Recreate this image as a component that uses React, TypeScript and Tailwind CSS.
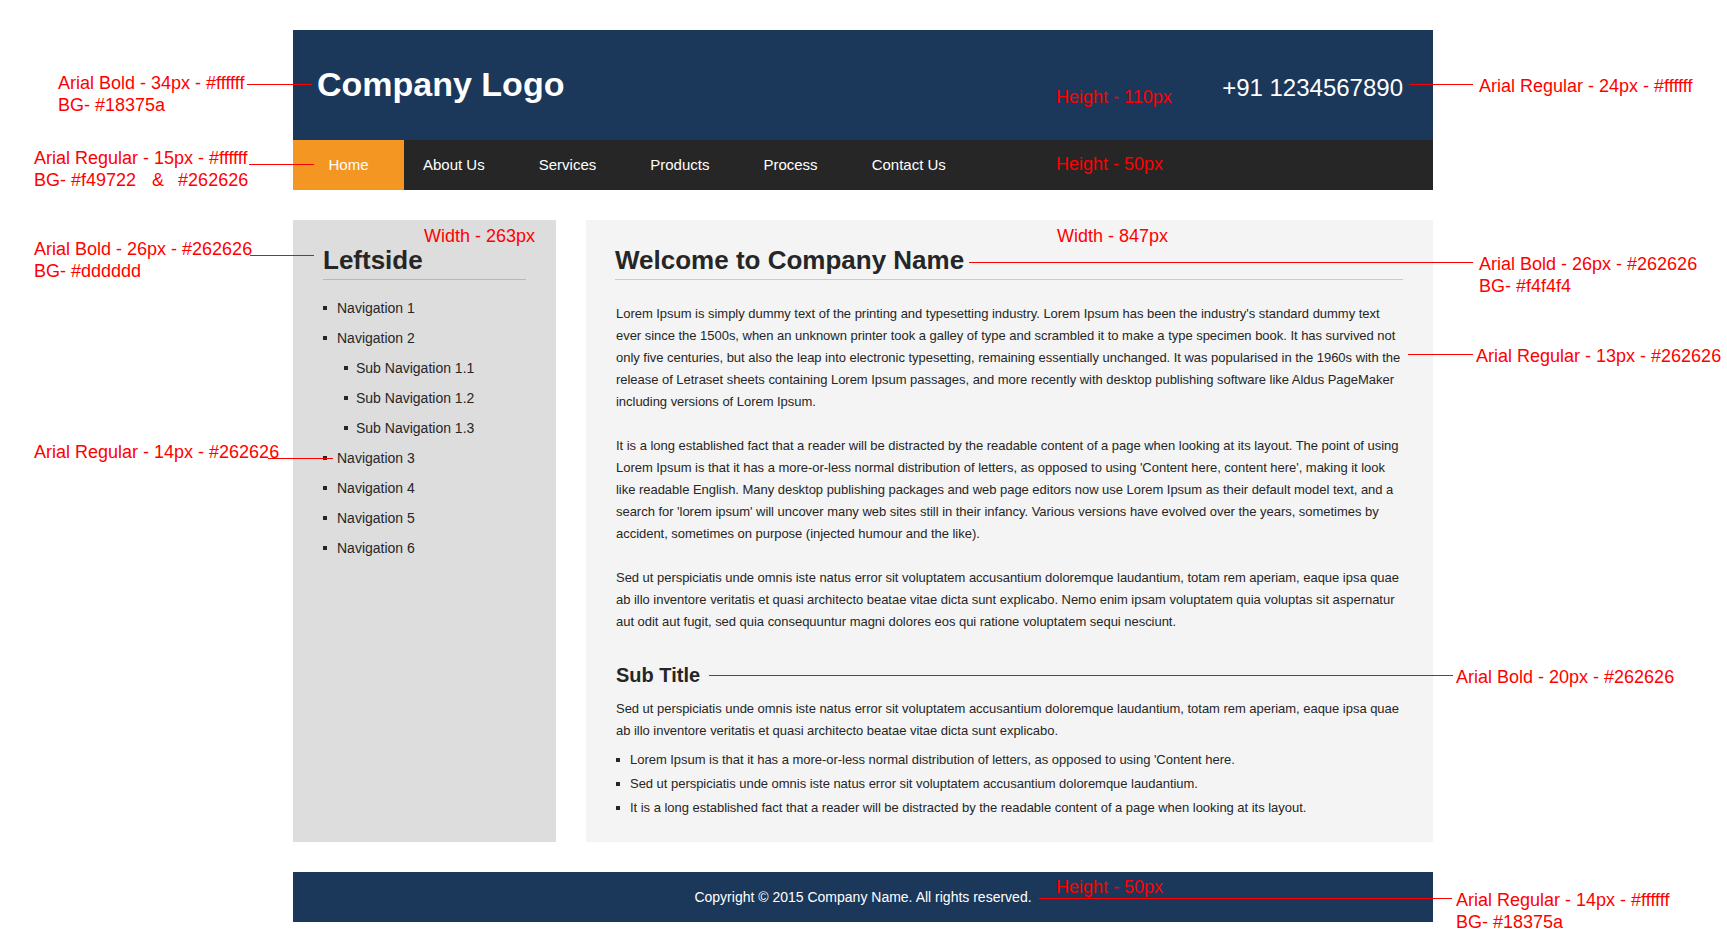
import React from "react";

const navLinks = ["About Us", "Services", "Products", "Process", "Contact Us"];

const sideNav = [
  { label: "Navigation 1", sub: false },
  { label: "Navigation 2", sub: false },
  { label: "Sub Navigation 1.1", sub: true },
  { label: "Sub Navigation 1.2", sub: true },
  { label: "Sub Navigation 1.3", sub: true },
  { label: "Navigation 3", sub: false },
  { label: "Navigation 4", sub: false },
  { label: "Navigation 5", sub: false },
  { label: "Navigation 6", sub: false },
];

const paragraphs = [
  "Lorem Ipsum is simply dummy text of the printing and typesetting industry. Lorem Ipsum has been the industry's standard dummy text ever since the 1500s, when an unknown printer took a galley of type and scrambled it to make a type specimen book. It has survived not only five centuries, but also the leap into electronic typesetting, remaining essentially unchanged. It was popularised in the 1960s with the release of Letraset sheets containing Lorem Ipsum passages, and more recently with desktop publishing software like Aldus PageMaker including versions of Lorem Ipsum.",
  "It is a long established fact that a reader will be distracted by the readable content of a page when looking at its layout. The point of using Lorem Ipsum is that it has a more-or-less normal distribution of letters, as opposed to using 'Content here, content here', making it look like readable English. Many desktop publishing packages and web page editors now use Lorem Ipsum as their default model text, and a search for 'lorem ipsum' will uncover many web sites still in their infancy. Various versions have evolved over the years, sometimes by accident, sometimes on purpose (injected humour and the like).",
  "Sed ut perspiciatis unde omnis iste natus error sit voluptatem accusantium doloremque laudantium, totam rem aperiam, eaque ipsa quae ab illo inventore veritatis et quasi architecto beatae vitae dicta sunt explicabo. Nemo enim ipsam voluptatem quia voluptas sit aspernatur aut odit aut fugit, sed quia consequuntur magni dolores eos qui ratione voluptatem sequi nesciunt.",
];

const bullets = [
  "Lorem Ipsum is that it has a more-or-less normal distribution of letters, as opposed to using 'Content here.",
  "Sed ut perspiciatis unde omnis iste natus error sit voluptatem accusantium doloremque laudantium.",
  "It is a long established fact that a reader will be distracted by the readable content of a page when looking at its layout.",
];

// red spec notes drawn over the mockup
const Notes = () => (
  <div className="pointer-events-none text-[18px] leading-[22px] text-[#ff0000]">
    <div className="absolute left-[58px] top-[72px]">
      <div>Arial Bold - 34px - #ffffff</div>
      <div>BG- #18375a</div>
    </div>
    <div className="absolute left-[247px] top-[84px] h-px w-[65px] bg-[#ff0000]" />

    <div className="absolute left-[34px] top-[147px]">
      <div>Arial Regular - 15px - #ffffff</div>
      <div>
        BG- #f49722<span className="ml-[16px]">&amp;</span>
        <span className="ml-[14px]">#262626</span>
      </div>
    </div>
    <div className="absolute left-[249px] top-[164px] h-px w-[65px] bg-[#ff0000]" />

    <div className="absolute left-[34px] top-[238px]">
      <div>Arial Bold - 26px - #262626</div>
      <div>BG- #dddddd</div>
    </div>
    <div className="absolute left-[250px] top-[255px] h-px w-[64px] bg-[#ff0000]" />

    <div className="absolute left-[34px] top-[441px]">Arial Regular - 14px - #262626</div>
    <div className="absolute left-[268px] top-[458px] h-px w-[65px] bg-[#ff0000]" />

    <div className="absolute left-[424px] top-[225px]">Width - 263px</div>
    <div className="absolute left-[1056px] top-[86px]">Height - 110px</div>
    <div className="absolute left-[1056px] top-[153px]">Height - 50px</div>
    <div className="absolute left-[1057px] top-[225px]">Width - 847px</div>

    <div className="absolute left-[1479px] top-[75px]">Arial Regular - 24px - #ffffff</div>
    <div className="absolute left-[1409px] top-[84px] h-px w-[64px] bg-[#ff0000]" />

    <div className="absolute left-[1479px] top-[253px]">
      <div>Arial Bold - 26px - #262626</div>
      <div>BG- #f4f4f4</div>
    </div>
    <div className="absolute left-[969px] top-[262px] h-px w-[504px] bg-[#ff0000]" />

    <div className="absolute left-[1476px] top-[345px]">Arial Regular - 13px - #262626</div>
    <div className="absolute left-[1408px] top-[354px] h-px w-[65px] bg-[#ff0000]" />

    <div className="absolute left-[1456px] top-[666px]">Arial Bold - 20px - #262626</div>
    <div className="absolute left-[709px] top-[675px] h-px w-[744px] bg-[#ff0000]" />

    <div className="absolute left-[1056px] top-[876px]">Height - 50px</div>
    <div className="absolute left-[1456px] top-[889px]">
      <div>Arial Regular - 14px - #ffffff</div>
      <div>BG- #18375a</div>
    </div>
    <div className="absolute left-[1039px] top-[898px] h-px w-[413px] bg-[#ff0000]" />
  </div>
);

export default function App() {
  return (
    <div className="relative min-h-[952px] w-full overflow-hidden bg-white font-['Liberation_Sans',Arial,sans-serif] text-[#262626]">
      <div className="ml-[293px] w-[1140px] pt-[30px]">
        <header className="flex h-[110px] items-baseline justify-between bg-[#1b375a] pl-[24px] pr-[30px] pt-[34px] text-white">
          <div className="text-[34px] font-bold leading-[40px]">Company Logo</div>
          <div className="text-[24px] leading-[40px]">+91 1234567890</div>
        </header>

        <nav className="flex h-[50px] bg-[#262626] text-[15px] text-white">
          <a className="flex w-[111px] items-center justify-center bg-[#f49722]">Home</a>
          <ul className="flex items-center gap-[54px] pl-[19px]">
            {navLinks.map((item) => (
              <li key={item}>{item}</li>
            ))}
          </ul>
        </nav>

        <main className="mt-[30px] flex gap-[30px]">
          <aside className="w-[263px] shrink-0 bg-[#dddddd] px-[30px] pt-[25px]">
            <h2 className="border-b border-[#b8b8b8] pb-[4px] text-[26px] font-bold leading-[30px]">
              Leftside
            </h2>
            <ul className="mt-[13px] text-[14px]">
              {sideNav.map((item) => (
                <li
                  key={item.label}
                  className={
                    item.sub
                      ? "flex h-[30px] items-center gap-[8px] pl-[21px]"
                      : "flex h-[30px] items-center gap-[10px]"
                  }
                >
                  <span className="h-[4px] w-[4px] bg-[#262626]" />
                  {item.label}
                </li>
              ))}
            </ul>
          </aside>

          <section className="flex-1 bg-[#f4f4f4] px-[30px] pb-[22px] pt-[25px]">
            <h1 className="-ml-px border-b border-[#cbcbcb] pb-[4px] pl-0 text-[26px] font-bold leading-[30px]">
              Welcome to Company Name
            </h1>
            <div className="mt-[23px] text-[13px] leading-[22px] tracking-[-0.03px]">
              {paragraphs.map((p, i) => (
                <p key={i} className="mb-[22px]">
                  {p}
                </p>
              ))}
              <h3 className="mb-[11px] mt-[30px] text-[20px] font-bold leading-[24px] tracking-normal">
                Sub Title
              </h3>
              <p>
                Sed ut perspiciatis unde omnis iste natus error sit voluptatem accusantium doloremque
                laudantium, totam rem aperiam, eaque ipsa quae ab illo inventore veritatis et quasi
                architecto beatae vitae dicta sunt explicabo.
              </p>
              <ul className="mt-[6px]">
                {bullets.map((b) => (
                  <li key={b} className="flex h-[24px] items-center gap-[10px]">
                    <span className="h-[4px] w-[4px] shrink-0 bg-[#262626]" />
                    {b}
                  </li>
                ))}
              </ul>
            </div>
          </section>
        </main>

        <footer className="mt-[30px] flex h-[50px] items-center justify-center bg-[#1b375a] text-[14px] text-white">
          Copyright © 2015 Company Name. All rights reserved.
        </footer>
      </div>

      <Notes />
    </div>
  );
}
